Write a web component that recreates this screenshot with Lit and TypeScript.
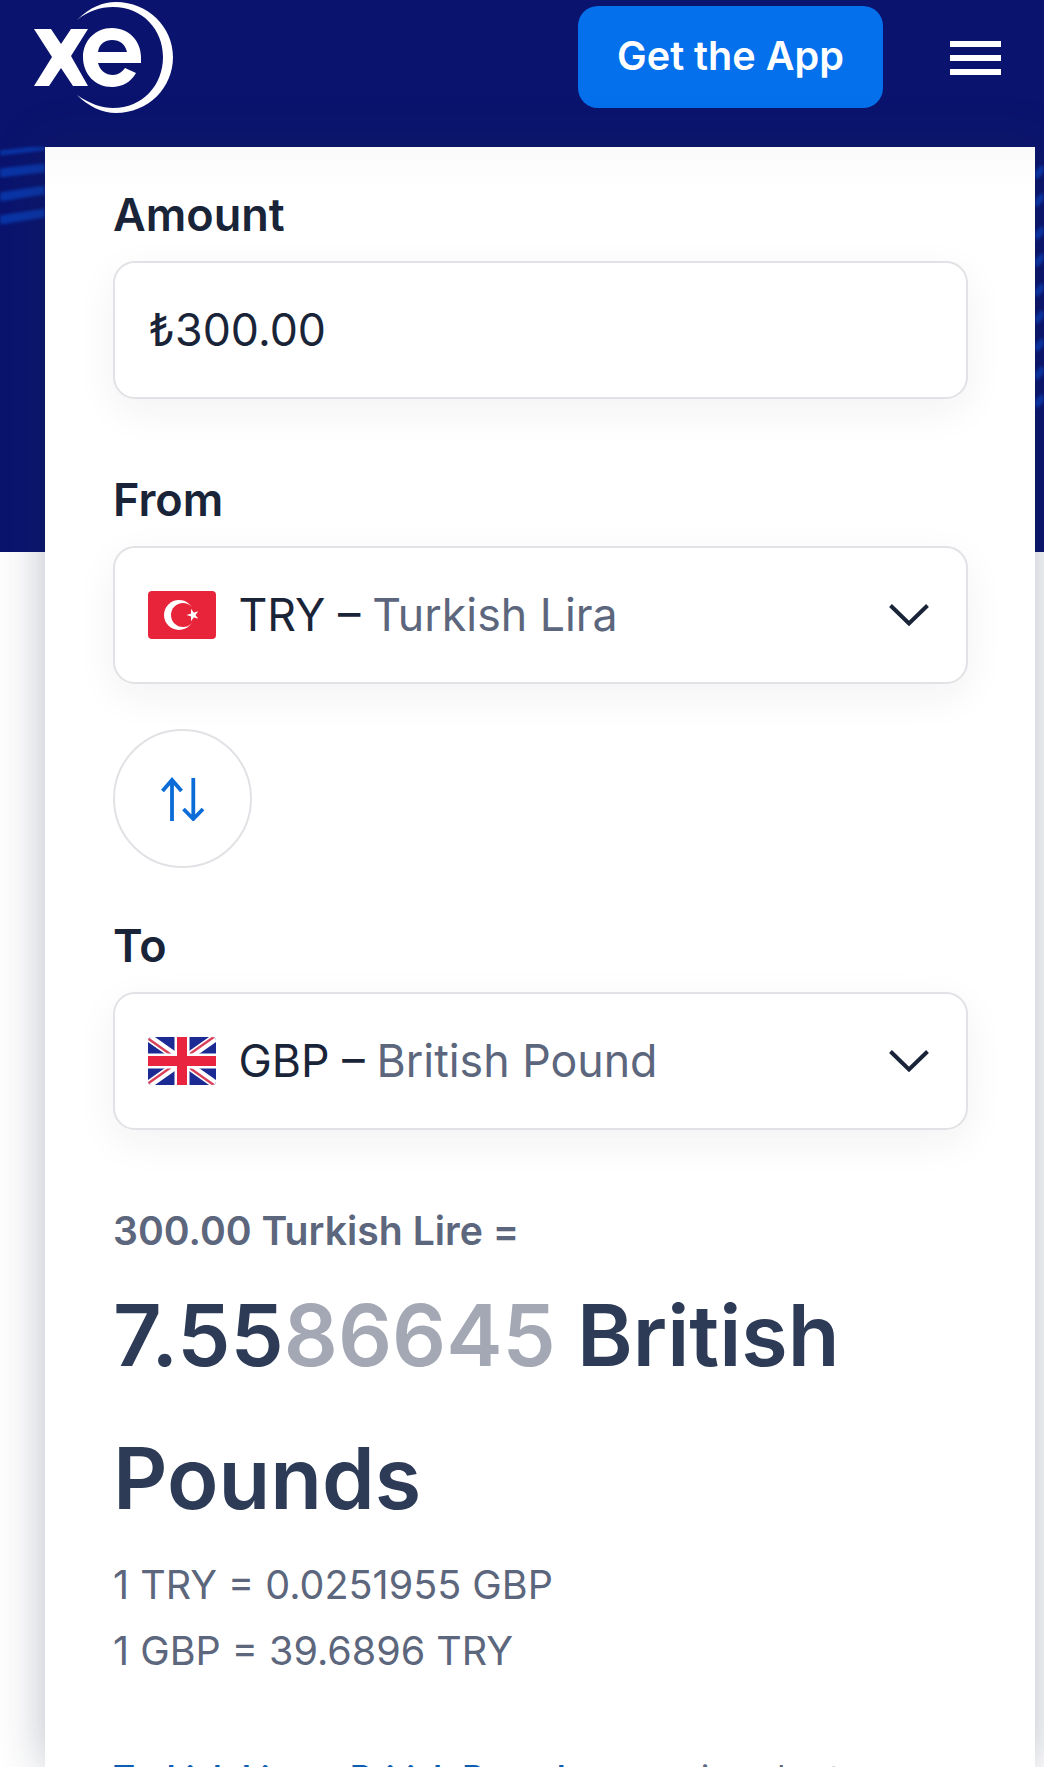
import { LitElement, html, css } from "lit";
import { customElement } from "lit/decorators.js";

const chevron = html`<svg class="chev" viewBox="0 0 40 24" fill="none" stroke="#1a2438" stroke-width="4"><path d="M1.5 2.5 20 20.5 38.5 2.5"/></svg>`;

const turkey = html`<svg class="flag" viewBox="0 0 68 48"><rect width="68" height="48" rx="4" fill="#e8243a"/><circle cx="31" cy="24" r="15" fill="#fff"/><circle cx="35" cy="24" r="12" fill="#e8243a"/><polygon fill="#fff" points="38.5,24 50.26,20.18 43,30.18 43,17.82 50.26,27.82"/></svg>`;

const uk = html`<svg class="flag" viewBox="0 0 68 48"><defs><clipPath id="r"><rect width="68" height="48" rx="4"/></clipPath></defs><g clip-path="url(#r)"><rect width="68" height="48" fill="#1c2b94"/><path d="M0 0 68 48M68 0 0 48" stroke="#fff" stroke-width="8"/><path d="M0 1.5 68 49.5M68-1.5 0 46.5" stroke="#d9405a" stroke-width="2.4"/><path d="M34 0V48M0 24H68" stroke="#fff" stroke-width="15"/><path d="M34 0V48M0 24H68" stroke="#e8243f" stroke-width="10"/></g></svg>`;

@customElement("app-root")
export class AppRoot extends LitElement {
  static styles = css`
    :host { display: block; width: 1044px; height: 1767px; overflow: hidden; position: relative; background: #fff; font-family: Inter, "Liberation Sans", sans-serif; color: #1a2438; }
    .hero { position: absolute; left: 0; right: 0; top: 0; height: 552px; background: #0a146e; overflow: hidden; }
    .waves { position: absolute; top: 147px; filter: blur(1.6px); }
    .waves.l { left: 0; width: 45px; height: 90px; }
    .waves.r { right: 0; width: 9px; height: 280px; }
    header { position: relative; height: 147px; box-sizing: border-box; padding: 6px 43px 0 0; display: flex; align-items: flex-start; justify-content: space-between; }
    .logo { width: 180px; height: 120px; margin-top: -6px; flex: none; }
    .right { display: flex; align-items: flex-start; gap: 67px; }
    .app { width: 305px; height: 102px; box-sizing: border-box; padding-bottom: 3px; background: #0470ec; color: #fff; border-radius: 20px; display: flex; align-items: center; justify-content: center; font-size: 39.6px; font-weight: 600; }
    .burger { display: flex; flex-direction: column; gap: 8px; width: 51px; margin-top: 35px; }
    .burger i { display: block; height: 6px; background: #fff; }
    .card { position: relative; margin: 0 9px 0 45px; box-sizing: border-box; padding: 40.6px 67px 0 68px; height: 1620px; background: linear-gradient(#fafafb, #fff 40px); box-shadow: 0 0 45px rgba(30, 40, 70, .3); }
    .label { font-size: 45px; font-weight: 600; line-height: 54px; color: #1a2438; margin-bottom: 19px; }
    .box { height: 138px; box-sizing: border-box; border: 2.5px solid #e1e2e5; border-radius: 22px; background: #fff; box-shadow: 0 12px 40px rgba(30, 40, 70, .06); display: flex; align-items: center; padding: 0 37px 0 32.5px; font-size: 44.7px; color: #1a2438; }
    .gap { margin-bottom: 74px; padding-left: 33.5px; }
    .flag { width: 68px; height: 48px; margin-right: 23px; flex: none; }
    .name { color: #5c667c; margin-left: 12px; }
    .chev { width: 40px; height: 24px; margin-left: auto; }
    .swap { width: 139px; height: 139px; box-sizing: border-box; border: 2.5px solid #e1e2e5; border-radius: 50%; margin: 45.5px 0 51px; display: flex; align-items: center; justify-content: center; }
    .swap svg { width: 44px; height: 44px; }
    .from { margin-top: 77px; font-size: 39.2px; font-weight: 600; color: #5c667c; line-height: 48px; }
    .big { font-size: 84.6px; font-weight: 600; line-height: 143px; color: #2d3b57; margin-top: 9px; }
    .big span { color: #a3a8b4; }
    .rate { font-size: 39.5px; line-height: 66px; color: #5c667c; }
    .rates { margin-top: 2px; }
    .link { margin-top: 68.5px; font-size: 33.4px; line-height: 50px; color: #5c667c; white-space: nowrap; }
    .link b { color: #0a5fb4; font-weight: 600; }
  `;

  render() {
    return html`
      <div class="hero">
        <svg class="waves l" viewBox="0 0 45 90" fill="none" stroke="#0a35a8" stroke-width="9"><path d="M0 6Q25 3 45 1" stroke-width="5"/><path d="M0 26Q25 23 45 21"/><path d="M0 50Q25 46 45 43"/><path d="M0 73Q25 69 45 66"/></svg>
        <svg class="waves r" viewBox="0 0 9 280" fill="none" stroke="#0a35a8" stroke-width="7"><path d="M0 30 9 20M0 58 9 48M0 91 9 81M0 118 9 108M0 148 9 138M0 175 9 165M0 203 9 193M0 231 9 221M0 259 9 249"/></svg>
      </div>
      <header>
        <svg class="logo" viewBox="0 0 180 120">
          <path fill="#fff" d="M34 29H51L61 44 71 29H88L71 56 88 86H73L61 68 49 86H34L52 57Z"/>
          <path fill="#fff" fill-rule="evenodd" d="M141 63H98C100 71 106 75 113 75 118 75 122 72 125 68L136 73C131 82 122 87 112 87 95 87 83 74 83 57 83 41 95 28 112 28 130 28 141 42 141 57ZM98 52H127C125 44 120 40 112 40 105 40 99 44 98 52Z"/>
          <path fill="#fff" d="M77 20C90 7 103 2 116 2 148 2 173 27 173 57 173 88 148 113 116 113 102 113 88 106 77 95 90 104 102 108 113 108 143 108 163 85 163 57 163 30 143 7 113 7 100 7 88 11 77 20Z"/>
        </svg>
        <div class="right">
          <div class="app">Get the App</div>
          <div class="burger"><i></i><i></i><i></i></div>
        </div>
      </header>
      <main class="card">
        <div class="label">Amount</div>
        <div class="box gap">₺300.00</div>
        <div class="label">From</div>
        <div class="box">${turkey}<span>TRY –</span><span class="name">Turkish Lira</span>${chevron}</div>
        <div class="swap"><svg viewBox="0 0 44 44" fill="none" stroke="#0b6cd8" stroke-width="3.8"><path d="M11 44V3M1.5 14 11 3 20.5 14M32.3 1V42M22.5 32 32.3 42 42 32"/></svg></div>
        <div class="label">To</div>
        <div class="box">${uk}<span>GBP –</span><span class="name">British Pound</span>${chevron}</div>
        <div class="from">300.00 Turkish Lire =</div>
        <div class="big">7.55<span>86645</span> British Pounds</div>
        <div class="rates"><div class="rate">1 TRY = 0.0251955 GBP</div><div class="rate">1 GBP = 39.6896 TRY</div></div>
        <div class="link"><b>Turkish Lira to British Pound</b> conversion chart</div>
      </main>
    `;
  }
}
